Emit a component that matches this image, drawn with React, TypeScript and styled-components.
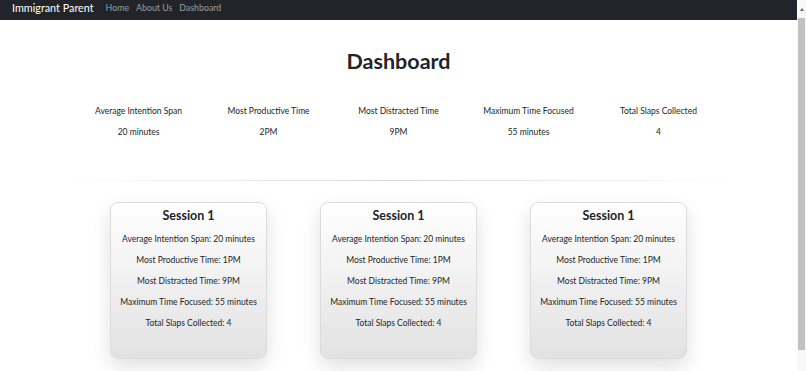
import React from "react";
import styled, {createGlobalStyle} from "styled-components";

const stats = [
    {label: "Average Intention Span", value: "20 minutes"},
    {label: "Most Productive Time", value: "2PM"},
    {label: "Most Distracted Time", value: "9PM"},
    {label: "Maximum Time Focused", value: "55 minutes"},
    {label: "Total Slaps Collected", value: "4"},
]

const sessions = [1, 2, 3].map(() => ({
    title: "Session 1",
    lines: [
        "Average Intention Span: 20 minutes",
        "Most Productive Time: 1PM",
        "Most Distracted Time: 9PM",
        "Maximum Time Focused: 55 minutes",
        "Total Slaps Collected: 4",
    ]
}))

export default function App() {
    return <>
        <GlobalStyle/>
        <Page>
            <Content>
                <Navbar>
                    <Brand>Immigrant Parent</Brand>
                    <NavLink>Home</NavLink>
                    <NavLink>About Us</NavLink>
                    <NavLink>Dashboard</NavLink>
                </Navbar>
                <Title>Dashboard</Title>
                <StatsRow>
                    {stats.map(s => <Stat key={s.label}>
                        <div>{s.label}</div>
                        <div>{s.value}</div>
                    </Stat>)}
                </StatsRow>
                <Divider/>
                <CardsRow>
                    {sessions.map((s, i) => <Card key={i}>
                        <CardTitle>{s.title}</CardTitle>
                        {s.lines.map(l => <CardLine key={l}>{l}</CardLine>)}
                    </Card>)}
                </CardsRow>
            </Content>
            <ScrollTrack>
                <ScrollArrow/>
                <ScrollThumb/>
            </ScrollTrack>
        </Page>
    </>
}

//styled-components
const GlobalStyle = createGlobalStyle`
  html, body {
    margin: 0;
    padding: 0;
    background: #ffffff;
    font-family: "Segoe UI", "Lato", sans-serif;
    color: #212529;
  }
`

const Page = styled.div`
  display: flex;
  height: 100vh;
  overflow: hidden;
`

const Content = styled.div`
  flex: 1;
  min-width: 0;
`

const ScrollTrack = styled.div`
  width: 9px;
  background: #f8f8f8;
  display: flex;
  flex-direction: column;
  align-items: center;
`

const ScrollArrow = styled.div`
  width: 0;
  height: 0;
  margin: 8px 0 7px;
  border-left: 2.5px solid transparent;
  border-right: 2.5px solid transparent;
  border-bottom: 3px solid #666;
`

const ScrollThumb = styled.div`
  width: 7px;
  height: 332px;
  background: #c1c1c1;
`

const Navbar = styled.nav`
  height: 20px;
  background-color: #212529;
  display: flex;
  align-items: center;
  padding: 0 12px 5px;
  box-sizing: border-box;
  gap: 7px;
`

const Brand = styled.span`
  color: #ffffff;
  font-size: 10.8px;
  margin-right: 5px;
`

const NavLink = styled.span`
  color: rgba(255, 255, 255, 0.55);
  font-size: 8.8px;
`

const Title = styled.h1`
  margin: 0;
  padding-top: 28px;
  text-align: center;
  font-size: 21.5px;
  font-weight: 700;
  line-height: 26px;
`

const StatsRow = styled.div`
  display: grid;
  grid-template-columns: repeat(5, 130px);
  justify-content: center;
  margin-top: 31px;
`

const Stat = styled.div`
  display: flex;
  flex-direction: column;
  align-items: center;
  gap: 9px;
  font-size: 8.5px;
  line-height: 12px;
`

const Divider = styled.hr`
  border: none;
  height: 1px;
  margin: 42px 60px 0;
  background: linear-gradient(to right, rgba(0, 0, 0, 0), rgba(0, 0, 0, 0.16), rgba(0, 0, 0, 0));
`

const CardsRow = styled.div`
  display: flex;
  justify-content: center;
  gap: 53px;
  margin-top: 21px;
`

const Card = styled.div`
  width: 155px;
  height: 151px;
  border: 1px solid #dcdcdc;
  border-radius: 8px;
  background: linear-gradient(to bottom, #ffffff, #e2e2e2);
  box-shadow: 0 8px 20px rgba(0, 0, 0, 0.12);
  display: flex;
  flex-direction: column;
  align-items: center;
  padding-top: 4px;
  box-sizing: content-box;
`

const CardTitle = styled.div`
  font-size: 12.5px;
  font-weight: 700;
  line-height: 18px;
  margin-bottom: 4px;
`

const CardLine = styled.div`
  font-size: 8.5px;
  line-height: 21px;
  white-space: nowrap;
`
